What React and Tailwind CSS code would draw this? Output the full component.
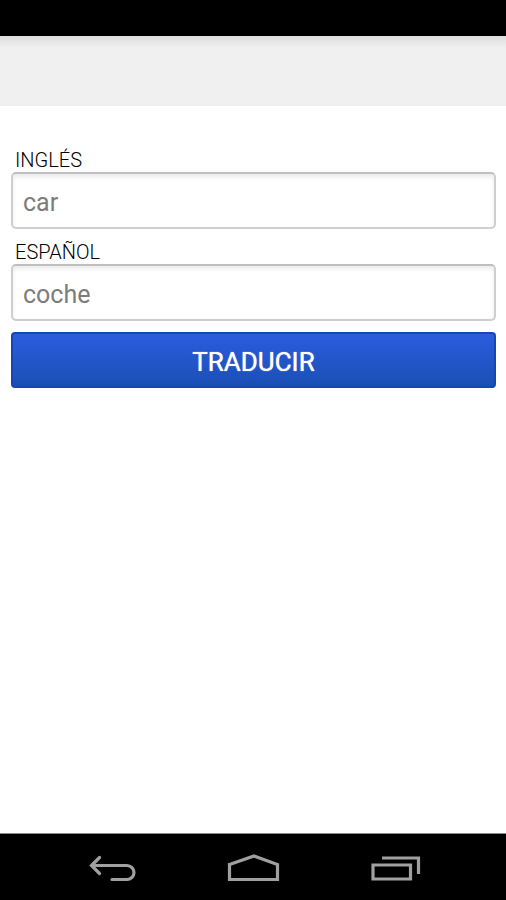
import React, { useState } from "react";

const Field = ({ id, label, value, onChange }) => (
  <div className="flex flex-col">
    <label htmlFor={id} className="px-[4px] text-[20px] leading-6 font-light text-black">
      {label}
    </label>
    <input
      id={id}
      type="text"
      value={value}
      onChange={(e) => onChange(e.target.value)}
      className="h-[57px] w-full rounded-[5px] border-2 border-[#cecece] border-t-[#bfbfbf] bg-white px-[10px] pt-1 text-[25px] text-[#7c7c7c] shadow-[inset_0_3px_4px_rgba(0,0,0,0.08)] outline-none"
    />
  </div>
);

const App = () => {
  const [english, setEnglish] = useState("car");
  const [spanish, setSpanish] = useState("coche");

  return (
    <div className="flex min-h-screen w-full flex-col bg-white font-['Roboto',sans-serif]">
      {/* ===== STATUS BAR ===== */}
      <div className="h-9 bg-black" />

      {/* ===== TITLE BAR ===== */}
      <header className="h-[70px] bg-linear-to-b from-[#dddddd] to-[#f0f0f0] to-[12px]" />

      {/* ===== TRANSLATE FORM ===== */}
      <main className="flex-1 pt-[42px] pr-[10px] pl-[11px]">
        <form className="flex flex-col gap-[11px]" onSubmit={(e) => e.preventDefault()}>
          <Field id="english" label="INGLÉS" value={english} onChange={setEnglish} />
          <Field id="spanish" label="ESPAÑOL" value={spanish} onChange={setSpanish} />
          <button
            type="submit"
            className="h-14 w-full rounded-[4px] border-2 border-[#1446b4] bg-linear-to-b from-[#2b5ce0] to-[#1a4fb4] pt-1 text-[26px] text-white text-shadow-[0_0_1px_#ffffff]"
          >
            TRADUCIR
          </button>
        </form>
      </main>

      {/* ===== NAVIGATION BAR ===== */}
      <nav className="grid h-[67px] grid-cols-3 border-t border-[#8a8a8a] bg-black px-[42px] pt-1">
        <button type="button" aria-label="Back" className="flex items-center justify-center">
          <svg width="56" height="32" viewBox="0 0 56 32" fill="none" stroke="#a0a0a0" strokeWidth="3.2" strokeLinecap="round">
            <path d="M15.5 4.5 L7.5 12.5 L15.5 20.5 M8.5 12.5 H43 A6.8 6.8 0 0 1 43 26.5 H28" />
          </svg>
        </button>
        <button type="button" aria-label="Home" className="flex items-center justify-center">
          <svg width="56" height="32" viewBox="0 0 56 32" fill="none" stroke="#a0a0a0" strokeWidth="3.2">
            <path d="M4.5 11.5 L29 3 L52.5 11.5 V26.5 H4.5 Z" />
          </svg>
        </button>
        <button type="button" aria-label="Recent apps" className="flex items-center justify-center">
          <svg width="56" height="32" viewBox="0 0 56 32" fill="none" stroke="#a0a0a0" strokeWidth="3.2">
            <path d="M7 12 H44.5 V26 H7 Z M16 5 H52.5 V21" />
          </svg>
        </button>
      </nav>
    </div>
  );
};

export default App;
